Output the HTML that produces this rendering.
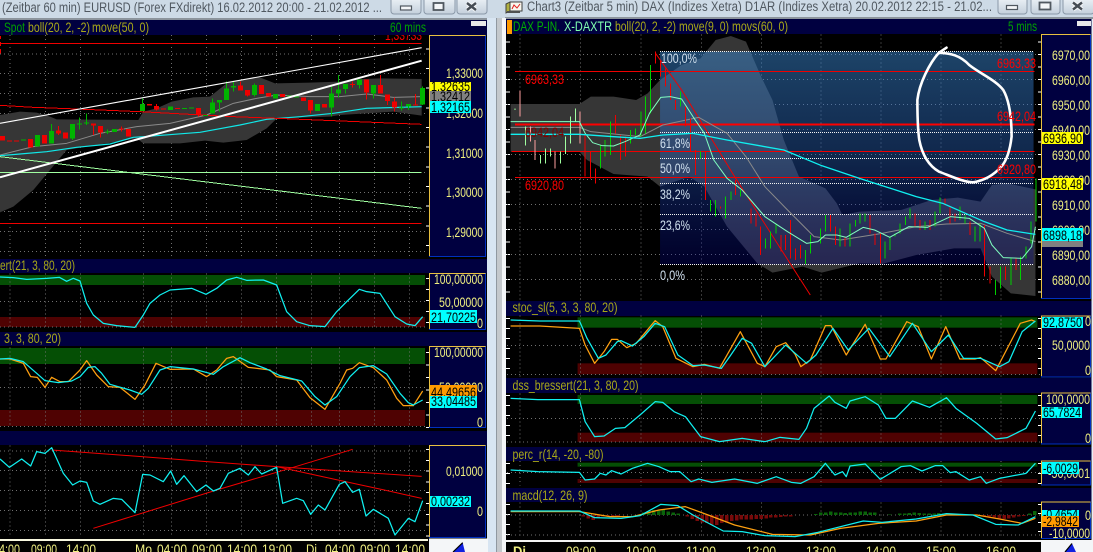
<!DOCTYPE html>
<html><head><meta charset="utf-8"><style>
html,body{margin:0;padding:0;background:#d8e5f2;width:1093px;height:552px;overflow:hidden}
svg{display:block;font-family:"Liberation Sans",sans-serif}
polyline,path,line,polygon,rect.n{vector-effect:non-scaling-stroke}
polyline{fill:none;stroke-linejoin:round}
.a{fill:#f0f080;font-size:14px}
.h{fill:#a8a818;font-size:14px}
.t{fill:#505860;font-size:13.5px}
.k{fill:#000;font-size:14px}
.r{fill:#ff0000;font-size:14px}
.f{fill:#d0e0ee;font-size:13.5px}
.g{stroke:#707070;stroke-width:1;stroke-dasharray:1 3;fill:none;shape-rendering:crispEdges}
.x{shape-rendering:crispEdges}
.cy{stroke:#10f0f0;stroke-width:1.25}
.or{stroke:#ffa010;stroke-width:1.25}
.ax{fill:#000040;stroke:#0030c0}
.gl{fill:none;stroke:#e8c040}
.tk{stroke:#fff;shape-rendering:crispEdges}
</style></head><body>
<svg width="1093" height="552" viewBox="0 0 1093 552" xmlns="http://www.w3.org/2000/svg">
<defs>
<linearGradient id="fib" x1="0" y1="0" x2="0" y2="1"><stop offset="0" stop-color="#3a88d0" stop-opacity=".5"/><stop offset=".5" stop-color="#2862be" stop-opacity=".4"/><stop offset="1" stop-color="#000096" stop-opacity=".28"/></linearGradient>
<linearGradient id="btn" x1="0" y1="0" x2="0" y2="1"><stop offset="0" stop-color="#eef3f8"/><stop offset="1" stop-color="#c4d0dc"/></linearGradient>
<clipPath id="cl"><rect x="0" y="35" width="428" height="221"/></clipPath>
<clipPath id="cr"><rect x="507" y="34" width="534" height="266"/></clipPath>
</defs>
<rect width="1093" height="552" fill="#d8e5f2"/>
<rect x="0" y="0" width="1093" height="18" fill="#cddae6"/>
<rect x="0" y="18" width="487" height="2" fill="#8c949c"/>
<rect x="505" y="17" width="588" height="2" fill="#8c949c"/>
<rect x="497" y="18" width="5" height="534" fill="#c4c8cc"/>
<rect x="496" y="18" width="1" height="534" fill="#9098a0"/>
<rect x="502" y="18" width="4" height="534" fill="#f4f6f8"/>

<!-- title bars -->
<text class="t" x="2" y="12" textLength="380" lengthAdjust="spacingAndGlyphs">(Zeitbar 60 min)  EURUSD (Forex FXdirekt) 16.02.2012 20:00 - 21.02.2012 ...</text>
<g fill="url(#btn)" stroke="#8a98a8">
<rect x="391" y="-3" width="30" height="17" rx="3"/><rect x="424" y="-3" width="31" height="17" rx="3"/><rect x="457" y="-3" width="30" height="17" rx="3"/>
<rect x="998" y="-3" width="29" height="17" rx="3"/><rect x="1031" y="-3" width="29" height="17" rx="3"/><rect x="1063" y="-3" width="31" height="17" rx="3"/>
</g>
<g fill="#f4f6f8" stroke="#505860" stroke-width="1.2">
<rect x="400.5" y="6" width="11" height="4"/><rect x="433.5" y="3" width="10" height="7" stroke-width="1.8"/>
<rect x="1006.5" y="5.5" width="11" height="4"/><rect x="1039.5" y="2.5" width="11" height="7" stroke-width="1.8"/>
</g>
<path d="M467 3L476 10M476 3L467 10M1073 2.5L1082 9.5M1082 2.5L1073 9.5" stroke="#f4f6f8" stroke-width="4.5" fill="none"/>
<path d="M467 3L476 10M476 3L467 10M1073 2.5L1082 9.5M1082 2.5L1073 9.5" stroke="#454c54" stroke-width="2.4" fill="none"/>
<g><rect x="510" y="2" width="12" height="9" fill="#f8f8f0" stroke="#404040"/><path d="M512 9L514 5L517 8L520 4" stroke="#e02020" fill="none"/><path d="M506 4L510 2V11L506 13Z" fill="#b0b040" stroke="#404040"/><rect x="507" y="11" width="13" height="2" fill="#505050"/></g>
<text class="t" x="527" y="11" textLength="465" lengthAdjust="spacingAndGlyphs">Chart3 (Zeitbar 5 min)  DAX (Indizes Xetra) D1AR (Indizes Xetra) 20.02.2012 22:15 - 21.02...</text>

<!-- LEFT WINDOW -->
<rect x="0" y="20" width="487" height="532" fill="#000"/>
<rect x="0" y="20" width="487" height="15" fill="#000040"/>
<rect x="471" y="21" width="15" height="5" fill="#e8e8e8"/>
<text x="4" y="32" font-size="14" fill="#00a000" textLength="21" lengthAdjust="spacingAndGlyphs">Spot</text>
<text class="h" x="28" y="32" textLength="62" lengthAdjust="spacingAndGlyphs">boll(20, 2, -2)</text>
<text class="h" x="92" y="32" textLength="57" lengthAdjust="spacingAndGlyphs">move(50, 0)</text>
<text x="390" y="32" font-size="14" fill="#00a000" textLength="36" lengthAdjust="spacingAndGlyphs">60 mins</text>
<path d="M0.5,36V39M0.5,42V46M0.5,49V54" stroke="#f00000" fill="none"/>

<g clip-path="url(#cl)"><g transform="scale(.33333)">
<path class="g" d="M30,105V768M136,105V768M241,105V768M430,105V768M514,105V768M619,105V768M724,105V768M829,105V768M934,105V768M1018,105V768M1123,105V768M1228,105V768M0,104H1280M0,162H1280M0,220H1280M0,280H1280M0,340H1280M0,398H1280M0,458H1280M0,517H1280M0,577H1280M0,635H1280M0,695H1280M0,755H1280"/>
<path fill="#363636" d="M0,345L60,335L110,338L150,350L170,358L415,360L430,335L470,325L515,305L580,292L630,290L680,250L720,240L780,232L825,250L930,248L1018,245L1060,238L1140,235L1265,237V347L1180,335L1020,345L990,350L830,356L800,385L740,420L670,428L615,422L540,430L430,430L410,415L200,450L150,510L100,570L40,620L0,637Z"/>
<polyline stroke="#8a8a8a" points="0,465 100,440 200,430 300,400 410,380 510,370 620,345 700,310 770,295 830,285 930,290 1020,290 1100,282 1180,292 1265,290"/>
<polyline stroke="#10e8e8" stroke-width="1.2" points="0,467 60,462 140,455 230,442 330,432 400,412 430,410 600,397 720,375 800,358 900,350 1000,340 1100,325 1265,320"/>
<line class="x" x1="0" y1="130" x2="1265" y2="130" stroke="#f00000"/>
<line class="x" x1="0" y1="670" x2="1265" y2="670" stroke="#f00000"/>
<polyline class="x" stroke="#f00000" points="0,316 100,322 230,327 420,335 700,350 830,355 1000,362 1265,373"/>
<line class="x" x1="0" y1="517" x2="1265" y2="517" stroke="#a0ffa0"/>
<polyline class="x" stroke="#a0ffa0" points="0,470 1265,625"/>
<path class="x" fill="none" stroke="#00b400" stroke-width="1" d="M154,372V393M217,372V420M238,352V388M259,340V375M322,388V402M427,295V312M637,296V308M658,308V335M679,245V265M700,245V275M763,250V290M994,260V350M1015,225V292M1036,267V280M1078,255V265M1120,280V295M1204,305V332M1225,320V330M1267,260V315"/>
<path class="x" fill="none" stroke="#00b400" stroke-width="5" d="M70,418V421M112,405V440M154,393V430M217,372V415M238,371V374M259,367V370M322,394V397M343,387V396M427,312V333M511,320V330M553,324V327M574,323V326M616,345V348M637,308V340M658,300V308M679,265V300M700,258V263M763,255V285M826,282V295M868,287V290M889,289V292M952,312V333M994,280V322M1015,268V280M1036,252V267M1078,238V255M1120,255V280M1204,322V325M1225,312V320M1267,264V313"/>
<path class="x" fill="none" stroke="#f00000" stroke-width="1" d="M175,378V405M280,371V405M301,398V412M364,380V395M595,345V350M721,245V257M742,286V290M931,332V340M1057,245V262M1099,278V298M1141,225V255M1162,303V315M1183,292V335M1246,282V316M469,312V332"/>
<path class="x" fill="none" stroke="#f00000" stroke-width="5" d="M7,408V422M28,421V424M49,422V425M91,417V442M133,405V430M175,392V400M196,398V415M280,371V376M301,378V398M364,386V389M385,387V410M448,312V316M469,318V328M490,326V329M532,324V327M595,324V345M721,257V271M742,270V286M784,255V282M805,279V290M847,282V291M910,292V303M931,300V332M973,312V322M1057,252V255M1099,238V278M1141,255V280M1162,283V303M1183,305V322M1246,313V316"/>
<line x1="0" y1="370" x2="1265" y2="143" stroke="#fff" stroke-width="1.1"/>
<line x1="0" y1="532" x2="1265" y2="182" stroke="#fff" stroke-width="2"/>
</g>
<text class="r" x="385" y="40" textLength="37" lengthAdjust="spacingAndGlyphs">1,33733</text>
</g>

<!-- left axis main -->
<line class="tk" x1="427.5" y1="34" x2="427.5" y2="256" stroke-width="3" stroke-dasharray="1 18.67" stroke-dashoffset="-14.3"/>
<rect class="ax" x="429.5" y="35.5" width="56" height="221"/>
<path class="gl" d="M429.5,256V35.5H485.5"/>
<g class="a">
<text x="446" y="78" textLength="37" lengthAdjust="spacingAndGlyphs">1,33000</text>
<text x="446" y="118" textLength="37" lengthAdjust="spacingAndGlyphs">1,32000</text>
<text x="446" y="158" textLength="37" lengthAdjust="spacingAndGlyphs">1,31000</text>
<text x="446" y="197" textLength="37" lengthAdjust="spacingAndGlyphs">1,30000</text>
<text x="446" y="237" textLength="37" lengthAdjust="spacingAndGlyphs">1,29000</text>
</g>
<text class="k" x="431" y="93" textLength="39" lengthAdjust="spacingAndGlyphs">1,32635</text>
<rect x="430" y="82" width="41" height="9" fill="#ffff00"/>
<text class="k" x="431" y="91" textLength="39" lengthAdjust="spacingAndGlyphs">1,32635</text>
<rect x="430" y="91" width="41" height="10" fill="#808080"/><text class="k" x="431" y="101" textLength="39" lengthAdjust="spacingAndGlyphs">1,32412</text>
<rect x="430" y="101" width="41" height="12" fill="#00ffff"/><text class="k" x="431" y="112" textLength="39" lengthAdjust="spacingAndGlyphs">1,32165</text>

<!-- left sub panels -->
<rect x="0" y="259" width="487" height="14" fill="#000040"/>
<rect x="0" y="332" width="487" height="14" fill="#000040"/>
<rect x="0" y="431" width="487" height="14" fill="#000040"/>
<text class="h" x="0" y="270" textLength="75" lengthAdjust="spacingAndGlyphs">ert(21, 3, 80, 20)</text>
<text class="h" x="4" y="343" textLength="57" lengthAdjust="spacingAndGlyphs">3, 3, 80, 20)</text>
<rect x="0" y="275" width="425" height="10" fill="#054f05"/>
<rect x="0" y="317" width="425" height="10" fill="#4f0202"/>
<rect x="0" y="348" width="425" height="16" fill="#054f05"/>
<rect x="0" y="410" width="425" height="16" fill="#4f0202"/>
<g transform="translate(0,255) scale(.33333)">
<path class="g" d="M30,55V224M136,55V224M241,55V224M430,55V224M514,55V224M619,55V224M724,55V224M829,55V224M934,55V224M1018,55V224M1123,55V224M1228,55V224M30,278V515M136,278V515M241,278V515M430,278V515M514,278V515M619,278V515M724,278V515M829,278V515M934,278V515M1018,278V515M1123,278V515M1228,278V515M30,572V848M136,572V848M241,572V848M430,572V848M514,572V848M619,572V848M724,572V848M829,572V848M934,572V848M1018,572V848M1123,572V848M1228,572V848M0,140H1275M0,398H1275M0,588H1275M0,646H1275M0,707H1275M0,767H1275M0,827H1275"/>
<path class="g" d="M0,216H1275M0,514H1275"/>
<polyline class="cy" points="0,66 40,68 80,73 140,70 178,67 200,79 220,70 240,78 260,145 280,180 310,205 350,212 405,217 430,180 450,145 480,120 510,105 575,100 618,118 650,100 680,75 710,67 740,76 790,75 830,90 860,170 890,200 930,212 975,215 1010,170 1040,140 1078,103 1100,110 1140,115 1185,185 1220,207 1245,212 1268,185"/>
<polyline class="or" points="0,312 30,312 70,325 92,365 112,367 135,397 155,367 180,380 205,380 240,345 260,317 290,360 325,395 360,397 405,433 435,390 468,325 510,343 580,342 620,365 650,345 680,310 700,305 745,337 810,345 830,365 890,375 930,428 975,463 1020,385 1040,345 1058,340 1078,323 1120,338 1160,375 1190,430 1210,452 1240,452 1268,408"/>
<polyline class="cy" points="0,312 30,310 70,320 110,355 135,377 175,383 215,378 240,365 265,337 285,335 305,355 330,388 355,395 390,405 425,418 445,400 480,345 510,335 580,342 640,358 670,335 720,308 750,323 800,342 840,362 905,378 945,425 975,450 1010,425 1050,365 1078,338 1120,332 1160,357 1200,415 1225,443 1240,450 1268,435"/>
<polyline stroke="#f00000" points="155,585 400,603 620,620 830,635 1050,650 1265,664"/>
<polyline stroke="#f00000" points="830,635 1000,672 1130,700 1265,730"/>
<polyline stroke="#f00000" points="280,820 650,705 860,643 1058,583"/>
<polyline class="cy" points="0,612 28,637 65,612 92,633 110,590 135,595 155,578 190,655 218,690 240,678 260,682 280,738 300,748 340,730 365,733 405,773 428,658 450,660 490,680 512,648 530,688 552,662 590,710 618,690 640,708 660,700 685,655 720,640 745,660 765,635 785,657 830,637 848,745 890,730 910,737 932,778 955,750 975,765 1018,688 1035,680 1058,712 1078,703 1098,783 1120,763 1165,790 1185,840 1225,790 1245,800 1268,737"/>
</g>
<line class="tk" x1="427.5" y1="273" x2="427.5" y2="330" stroke-width="3" stroke-dasharray="1 10" stroke-dashoffset="-5"/>
<line class="tk" x1="427.5" y1="346" x2="427.5" y2="428" stroke-width="3" stroke-dasharray="1 11.5" stroke-dashoffset="-6"/>
<line class="tk" x1="427.5" y1="446" x2="427.5" y2="537" stroke-width="3" stroke-dasharray="1 9.8" stroke-dashoffset="-3"/>
<rect class="ax" x="429.5" y="273.5" width="56" height="56"/><path class="gl" d="M429.5,329V273.5H485.5"/>
<rect class="ax" x="429.5" y="346.5" width="56" height="81"/><path class="gl" d="M429.5,427V346.5H485.5"/>
<rect class="ax" x="429.5" y="445.5" width="56" height="92"/><path class="gl" d="M429.5,537V445.5H485.5"/>
<g class="a">
<text x="434" y="284" textLength="49" lengthAdjust="spacingAndGlyphs">100,00000</text>
<text x="439" y="307" textLength="44" lengthAdjust="spacingAndGlyphs">50,00000</text>
<text x="477" y="328" textLength="6" lengthAdjust="spacingAndGlyphs">0</text>
<text x="434" y="357" textLength="49" lengthAdjust="spacingAndGlyphs">100,00000</text>
<text x="439" y="392" textLength="44" lengthAdjust="spacingAndGlyphs">50,00000</text>
<text x="477" y="427" textLength="6" lengthAdjust="spacingAndGlyphs">0</text>
<text x="446" y="476" textLength="37" lengthAdjust="spacingAndGlyphs">0,01000</text>
<text x="477" y="516" textLength="6" lengthAdjust="spacingAndGlyphs">0</text>
</g>
<rect x="430" y="310" width="47" height="13" fill="#00ffff"/><text class="k" x="431" y="322" textLength="45" lengthAdjust="spacingAndGlyphs">21,70225</text>
<rect x="430" y="385" width="47" height="11" fill="#ff9a00"/><text class="k" x="431" y="397" textLength="45" lengthAdjust="spacingAndGlyphs">44,49656</text>
<rect x="430" y="396" width="47" height="12" fill="#00ffff"/><text class="k" x="431" y="406" textLength="45" lengthAdjust="spacingAndGlyphs">33,04485</text>
<rect x="430" y="496" width="41" height="11" fill="#00ffff"/><text class="k" x="431" y="506" textLength="39" lengthAdjust="spacingAndGlyphs">0,00232</text>

<!-- left time axis -->
<rect x="0" y="539" width="428" height="2" fill="#f8f8e0"/>
<rect x="429" y="538.5" width="59" height="13.5" fill="#f4f6f8"/>
<polygon points="453,552 462.7,542.7 465,552" fill="#1020e0"/>
<path d="M453,552L462.7,542.7" stroke="#000" stroke-width="1.2" fill="none"/>
<g class="a" font-size="14">
<text x="-7" y="554" textLength="27" lengthAdjust="spacingAndGlyphs">04:00</text>
<text x="31" y="554" textLength="26" lengthAdjust="spacingAndGlyphs">09:00</text>
<text x="66" y="554" textLength="30" lengthAdjust="spacingAndGlyphs">14:00</text>
<text x="135" y="554" textLength="17" lengthAdjust="spacingAndGlyphs">Mo</text>
<text x="157" y="554" textLength="30" lengthAdjust="spacingAndGlyphs">04:00</text>
<text x="192" y="554" textLength="30" lengthAdjust="spacingAndGlyphs">09:00</text>
<text x="227" y="554" textLength="30" lengthAdjust="spacingAndGlyphs">14:00</text>
<text x="262" y="554" textLength="30" lengthAdjust="spacingAndGlyphs">19:00</text>
<text x="306" y="554" textLength="11" lengthAdjust="spacingAndGlyphs">Di</text>
<text x="325" y="554" textLength="30" lengthAdjust="spacingAndGlyphs">04:00</text>
<text x="360" y="554" textLength="30" lengthAdjust="spacingAndGlyphs">09:00</text>
<text x="395" y="554" textLength="30" lengthAdjust="spacingAndGlyphs">14:00</text>
</g>

<!-- RIGHT WINDOW -->
<rect x="506" y="19" width="585.5" height="533" fill="#000"/>
<rect x="506" y="19" width="585.5" height="15" fill="#000040"/>
<rect x="507" y="20" width="5" height="14" fill="#ff9a00"/>
<rect x="1077" y="21" width="14" height="5" fill="#e8e8e8"/>
<text x="513" y="31" font-size="14" fill="#00b000" textLength="47" lengthAdjust="spacingAndGlyphs">DAX P-IN.</text>
<text x="564" y="31" font-size="14" fill="#80ffb0" textLength="48" lengthAdjust="spacingAndGlyphs">X-DAXTR</text>
<text class="h" x="615" y="31" textLength="61" lengthAdjust="spacingAndGlyphs">boll(20, 2, -2)</text>
<text class="h" x="679" y="31" textLength="50" lengthAdjust="spacingAndGlyphs">move(9, 0)</text>
<text class="h" x="732" y="31" textLength="56" lengthAdjust="spacingAndGlyphs">movs(60, 0)</text>
<text x="1008" y="31" font-size="14" fill="#00a000" textLength="29" lengthAdjust="spacingAndGlyphs">5 mins</text>
<line class="tk" x1="508" y1="41.5" x2="508" y2="300" stroke-width="4" stroke-dasharray="1 11.5"/>

<g clip-path="url(#cr)"><g transform="translate(500,0) scale(.3784,.33333)">
<path class="g" d="M53,103V900M213,103V900M372,103V900M532,103V900M691,103V900M848,103V900M1007,103V900M1165,103V900M1324,103V900M18,163H1428M18,238H1428M18,313H1428M18,388H1428M18,463H1428M18,538H1428M18,613H1428M18,688H1428M18,763H1428M18,838H1428"/>
<path fill="#363636" d="M28,312L210,312L240,290L300,290L360,300L390,280L423,240L480,195L530,175L570,120L610,108L650,125L690,230L720,300L750,420L790,530L860,565L890,610L905,645L950,635L1060,630L1140,600L1210,593L1270,605L1300,555L1340,550L1415,568V888L1350,880L1300,830L1270,745L1200,745L1100,765L1010,792L950,790L850,818L800,800L720,818L680,790L600,680L540,560L500,530L423,560L390,530L300,522L230,480L210,455L28,455Z"/>
<rect x="423" y="155" width="987" height="638" fill="url(#fib)"/>
<path class="x" fill="none" stroke="#f4f4f4" stroke-width="1" stroke-dasharray="1 1" d="M423,155H1410M423,397H1410M423,475H1410M423,551H1410M423,643H1410M423,793H1410"/>
<path class="x" fill="none" stroke="#f00000" d="M40,214H1412M30,454H1412M40,533H1412"/>
<path class="x" fill="none" stroke="#ff0000" stroke-width="2" d="M40,374H1412"/>
<polyline stroke="#f00000" points="411,160 480,270 620,530 820,885"/>
<polyline stroke="#8a8a8a" points="28,382 210,382 240,395 370,410 430,375 525,352 600,400 650,470 700,560 760,630 830,710 900,720 1010,700 1100,680 1180,672 1270,670 1340,700 1415,725"/>
<path class="x" fill="none" stroke="#ffa0a0" stroke-width="1" d="M53,272V350M80,380V425M93,420V480M146,455V505M212,335V430"/>
<path class="x" fill="none" stroke="#a0ffa0" stroke-width="1" d="M40,325V330M67,380V437M107,465V490M120,445V490M133,445V470M160,455V490M173,410V462M186,350V430M199,325V365"/>
<path class="x" fill="none" stroke="#f00000" stroke-width="1" d="M225,405V530M239,455V535M252,505V550M305,345V400M318,405V480M331,410V470M411,155V190M424,180V230M437,205V260M450,250V300M464,300V330M490,320V380M503,355V455M516,450V525M543,455V600M583,620V625M623,540V585M663,625V670M676,640V680M689,680V765M742,705V755M755,705V750M768,660V775M781,745V780M794,735V775M873,645V695M886,680V735M912,710V740M978,645V700M991,700V735M1005,700V790M1097,640V680M1110,660V690M1136,660V690M1176,595V615M1189,620V670M1202,640V665M1242,665V705M1281,675V830M1295,800V850M1336,800V840M1363,775V810"/>
<path class="x" fill="none" stroke="#00d000" stroke-width="1" d="M265,435V505M278,420V470M292,365V465M345,390V430M358,385V405M372,335V410M385,290V400M398,195V340M477,275V320M530,455V475M556,600V635M570,600V650M596,590V655M610,575V600M636,570V590M702,715V745M715,695V745M729,670V700M807,750V792M820,705V760M847,685V730M860,645V695M899,685V740M925,670V740M939,660V680M952,640V670M965,640V665M1018,725V775M1031,710V750M1044,700V710M1057,670V700M1071,650V675M1084,625V655M1123,665V690M1149,635V680M1163,592V640M1216,620V660M1229,645V670M1255,680V725M1268,670V725M1310,840V885M1323,800V865M1350,775V855M1376,770V840M1390,740V775M1403,665V730M1416,535V665"/>
<polyline stroke="#80ffc0" points="28,365 210,365 225,400 245,428 270,437 300,438 330,425 370,405 395,340 425,292 450,290 480,297 510,350 540,400 565,480 600,535 640,570 700,650 760,695 810,730 840,725 860,705 890,705 915,712 960,682 990,690 1030,712 1080,680 1130,682 1190,650 1240,655 1280,685 1300,735 1330,773 1380,775 1405,740 1415,680"/>
<polyline stroke="#10f0f0" stroke-width="1.3" points="28,403 210,403 300,410 370,415 430,405 510,400 600,420 750,450 850,497 950,535 1100,590 1170,610 1280,665 1340,690 1415,703"/>
<path fill="none" stroke="#fff" stroke-width="2.6" stroke-linecap="round" stroke-linejoin="round" d="M1180,143L1160,158C1190,160 1215,165 1240,195C1270,222 1310,240 1330,270C1345,300 1352,345 1352,410C1348,450 1340,480 1325,500C1305,525 1280,542 1250,547C1220,545 1185,525 1160,515C1130,495 1115,460 1108,420C1103,380 1103,340 1103,300C1108,250 1135,190 1160,158"/>
</g>
<g class="f">
<text x="661" y="63" textLength="36" lengthAdjust="spacingAndGlyphs">100,0%</text>
<text x="660" y="148" textLength="30" lengthAdjust="spacingAndGlyphs">61,8%</text>
<text x="660" y="173" textLength="30" lengthAdjust="spacingAndGlyphs">50,0%</text>
<text x="660" y="199" textLength="30" lengthAdjust="spacingAndGlyphs">38,2%</text>
<text x="660" y="230" textLength="30" lengthAdjust="spacingAndGlyphs">23,6%</text>
<text x="660" y="280" textLength="25" lengthAdjust="spacingAndGlyphs">0,0%</text>
</g>
<g class="r">
<text x="525" y="84" textLength="39" lengthAdjust="spacingAndGlyphs">6963,33</text>
<text x="525" y="137" textLength="39" lengthAdjust="spacingAndGlyphs" fill="#800000">6942,04</text>
<text x="525" y="190" textLength="39" lengthAdjust="spacingAndGlyphs">6920,80</text>
<text x="997" y="68" textLength="39" lengthAdjust="spacingAndGlyphs">6963,33</text>
<text x="997" y="121" textLength="39" lengthAdjust="spacingAndGlyphs">6942,04</text>
<text x="997" y="174" textLength="39" lengthAdjust="spacingAndGlyphs">6920,80</text>
</g></g>
<!-- right axis main -->
<line class="tk" x1="1039.5" y1="41.5" x2="1039.5" y2="299" stroke-width="3" stroke-dasharray="1 11.5"/>
<rect class="ax" x="1041.5" y="34.5" width="49" height="264"/><path class="gl" d="M1041.5,298V34.5H1090.5"/>
<g class="a">
<text x="1052" y="60" textLength="38" lengthAdjust="spacingAndGlyphs">6970,00</text>
<text x="1052" y="85" textLength="38" lengthAdjust="spacingAndGlyphs">6960,00</text>
<text x="1052" y="110" textLength="38" lengthAdjust="spacingAndGlyphs">6950,00</text>
<text x="1052" y="135" textLength="38" lengthAdjust="spacingAndGlyphs">6940,00</text>
<text x="1052" y="160" textLength="38" lengthAdjust="spacingAndGlyphs">6930,00</text>
<text x="1052" y="185" textLength="38" lengthAdjust="spacingAndGlyphs">6920,00</text>
<text x="1052" y="210" textLength="38" lengthAdjust="spacingAndGlyphs">6910,00</text>
<text x="1052" y="235" textLength="38" lengthAdjust="spacingAndGlyphs">6900,00</text>
<text x="1052" y="260" textLength="38" lengthAdjust="spacingAndGlyphs">6890,00</text>
<text x="1052" y="285" textLength="38" lengthAdjust="spacingAndGlyphs">6880,00</text>
</g>
<rect x="1042" y="132" width="41" height="12" fill="#ffff00"/><text class="k" x="1043" y="143" textLength="39" lengthAdjust="spacingAndGlyphs">6936,90</text>
<rect x="1042" y="178" width="41" height="12" fill="#ffff00"/><text class="k" x="1043" y="189" textLength="39" lengthAdjust="spacingAndGlyphs">6918,48</text>
<rect x="1042" y="241" width="41" height="6" fill="#808080"/>
<rect x="1042" y="228" width="41" height="13" fill="#00ffff"/><text class="k" x="1043" y="240" textLength="39" lengthAdjust="spacingAndGlyphs">6898,18</text>

<!-- right sub panels -->
<rect x="506" y="301" width="585.5" height="15" fill="#000040"/>
<rect x="506" y="378" width="585.5" height="15" fill="#000040"/>
<rect x="506" y="447" width="585.5" height="14" fill="#000040"/>
<rect x="506" y="488" width="585.5" height="14" fill="#000040"/>
<text class="h" x="512.5" y="312" textLength="105" lengthAdjust="spacingAndGlyphs">stoc_sl(5, 3, 3, 80, 20)</text>
<text class="h" x="512.5" y="390" textLength="126" lengthAdjust="spacingAndGlyphs">dss_bressert(21, 3, 80, 20)</text>
<text class="h" x="512.5" y="459" textLength="91" lengthAdjust="spacingAndGlyphs">perc_r(14, -20, -80)</text>
<text class="h" x="512.5" y="500" textLength="75" lengthAdjust="spacingAndGlyphs">macd(12, 26, 9)</text>
<line class="tk" x1="508" y1="318" x2="508" y2="377" stroke-width="4" stroke-dasharray="1 9"/>
<line class="tk" x1="508" y1="395" x2="508" y2="444" stroke-width="4" stroke-dasharray="1 9"/>
<line class="tk" x1="508" y1="463" x2="508" y2="485" stroke-width="4" stroke-dasharray="1 9"/>
<line class="tk" x1="508" y1="504" x2="508" y2="538" stroke-width="4" stroke-dasharray="1 9"/>
<g transform="translate(500,295) scale(.3784,.33333)">
<rect x="205" y="67" width="1215" height="31" fill="#054f05"/>
<rect x="205" y="205" width="1215" height="33" fill="#4f0202"/>
<rect x="205" y="300" width="1215" height="27" fill="#054f05"/>
<rect x="205" y="413" width="1215" height="28" fill="#4f0202"/>
<rect x="205" y="503" width="1215" height="12" fill="#054f05"/>
<rect x="205" y="552" width="1215" height="12" fill="#4f0202"/>
<path class="g" d="M53,62V245M213,62V245M372,62V245M532,62V245M691,62V245M848,62V245M1007,62V245M1165,62V245M1324,62V245M53,295V447M213,295V447M372,295V447M532,295V447M691,295V447M848,295V447M1007,295V447M1165,295V447M1324,295V447M53,498V572M213,498V572M372,498V572M532,498V572M691,498V572M848,498V572M1007,498V572M1165,498V572M1324,498V572M53,622V730M213,622V730M372,622V730M532,622V730M691,622V730M848,622V730M1007,622V730M1165,622V730M1324,622V730M18,152H1428M18,370H1428M18,533H1428M18,660H1428M18,720H1428M18,238H1428M18,441H1428"/>
<path class="x" fill="none" stroke="#0a640a" stroke-width="3.5" d="M380,660V653M393,660V648M406,660V645M419,660V645M432,660V643M445,660V650M458,660V653M471,660V655M835,660V657M848,660V653M861,660V652M874,660V649M887,660V652M900,660V653M913,660V654M926,660V653M939,660V652M952,660V649M965,660V649M978,660V652M991,660V653M1030,660V658M1056,660V656M1069,660V655M1082,660V654M1095,660V652M1108,660V654M1121,660V655M1134,660V656M1147,660V655M1160,660V654M1173,660V655M1190,660V656M1400,660V656M1413,660V648"/>
<path class="x" fill="none" stroke="#780a0a" stroke-width="3.5" d="M220,660V665M233,660V670M246,660V675M259,660V668M272,660V664M285,660V665M298,660V664M311,660V663M495,660V665M508,660V672M521,660V678M534,660V682M547,660V684M560,660V690M573,660V690M586,660V684M599,660V682M612,660V678M625,660V676M638,660V674M651,660V674M664,660V674M677,660V672M690,660V672M703,660V670M716,660V668M729,660V667M742,660V666M755,660V665M768,660V664M1280,660V664M1293,660V665M1306,660V668M1319,660V672M1332,660V672M1345,660V670M1358,660V668M1371,660V665M1384,660V663"/>
<polyline class="or" points="28,93 105,93 210,100 225,150 250,205 275,170 295,133 310,133 335,158 360,145 410,77 430,95 465,190 510,215 540,208 580,220 635,110 680,205 700,215 730,155 755,143 780,178 795,215 820,195 860,92 875,92 915,180 965,88 1005,192 1020,192 1075,80 1105,95 1140,192 1178,95 1215,192 1255,192 1270,188 1310,227 1375,85 1405,75 1415,80"/>
<polyline class="cy" points="28,75 105,78 210,78 230,130 260,190 280,180 310,140 320,137 350,153 380,125 410,85 435,95 470,180 510,212 540,210 585,220 610,180 640,130 665,145 700,215 755,150 780,175 810,205 835,180 880,100 920,165 975,100 1030,185 1090,85 1140,170 1185,120 1225,190 1270,190 1320,215 1345,200 1380,110 1415,78"/>
<polyline class="cy" points="28,310 100,314 210,314 225,380 250,425 275,423 305,400 330,398 370,360 410,320 430,322 460,350 490,365 530,425 580,440 640,430 700,440 740,427 790,433 810,400 830,340 870,303 885,322 915,340 925,318 965,305 1000,330 1020,370 1045,370 1090,318 1135,337 1180,308 1205,340 1260,385 1310,432 1340,428 1390,400 1415,348"/>
<polyline class="cy" points="28,525 100,530 210,532 225,555 250,552 265,535 280,540 295,527 320,537 350,520 390,505 420,515 450,530 475,530 505,560 525,552 560,562 620,552 680,565 730,545 770,562 795,565 830,545 860,505 885,540 905,530 915,545 925,513 965,507 1005,553 1060,515 1085,512 1115,528 1150,512 1170,512 1190,533 1205,530 1240,555 1270,545 1285,565 1320,550 1390,535 1415,505"/>
<polyline class="or" points="28,650 210,650 290,665 350,665 420,645 490,635 550,660 620,690 720,718 820,720 900,700 1000,685 1100,678 1180,660 1260,660 1320,672 1380,685 1415,670"/>
<polyline class="cy" points="28,648 210,648 250,668 320,670 370,662 425,628 470,632 510,660 590,708 640,710 700,722 780,725 840,712 960,678 1010,682 1100,672 1180,656 1250,660 1310,688 1370,690 1415,665"/>
</g>
<line class="tk" x1="1039.5" y1="318" x2="1039.5" y2="377" stroke-width="3" stroke-dasharray="1 9"/>
<line class="tk" x1="1039.5" y1="395" x2="1039.5" y2="444" stroke-width="3" stroke-dasharray="1 9"/>
<line class="tk" x1="1039.5" y1="463" x2="1039.5" y2="485" stroke-width="3" stroke-dasharray="1 9"/>
<line class="tk" x1="1039.5" y1="504" x2="1039.5" y2="538" stroke-width="3" stroke-dasharray="1 8"/>
<rect class="ax" x="1041.5" y="316" width="49" height="61"/><path class="gl" d="M1041.5,376V316H1090.5"/>
<rect class="ax" x="1041.5" y="393" width="49" height="51"/><path class="gl" d="M1041.5,443V393H1090.5"/>
<rect class="ax" x="1041.5" y="461" width="49" height="24"/><path class="gl" d="M1041.5,484V461H1090.5"/>
<rect class="ax" x="1041.5" y="502" width="49" height="36.5"/><path class="gl" d="M1041.5,538V502H1090.5"/>
<g class="a">
<text x="1052" y="350" textLength="38" lengthAdjust="spacingAndGlyphs">50,0000</text>
<text x="1085" y="375" textLength="6" lengthAdjust="spacingAndGlyphs">0</text>
<text x="1085" y="326" textLength="6" lengthAdjust="spacingAndGlyphs">0</text>
<text x="1046" y="404" textLength="44" lengthAdjust="spacingAndGlyphs">100,0000</text>
<text x="1085" y="443" textLength="6" lengthAdjust="spacingAndGlyphs">0</text>
<text x="1048" y="478" textLength="42" lengthAdjust="spacingAndGlyphs">-50,0001</text>
<text x="1085" y="520" textLength="6" lengthAdjust="spacingAndGlyphs">0</text>
<text x="1049" y="538" textLength="41" lengthAdjust="spacingAndGlyphs">-10,0000</text>
</g>
<rect x="1042" y="317" width="41" height="11" fill="#00ffff"/><text class="k" x="1043" y="327" textLength="39" lengthAdjust="spacingAndGlyphs">92,8750</text>
<rect x="1042" y="407" width="40" height="11" fill="#00ffff"/><text class="k" x="1043" y="417" textLength="38" lengthAdjust="spacingAndGlyphs">65,7824</text>
<rect x="1042" y="462" width="37" height="12" fill="#00ffff"/><text class="k" x="1043" y="473" textLength="35" lengthAdjust="spacingAndGlyphs">-6,0029</text>
<rect x="1042" y="510" width="37" height="6" fill="#00ffff"/><text class="k" x="1043" y="519" textLength="35" lengthAdjust="spacingAndGlyphs">-0,4654</text>
<rect x="1042" y="516" width="37" height="11" fill="#ff9a00"/><text class="k" x="1043" y="526" textLength="35" lengthAdjust="spacingAndGlyphs">-2,9842</text>

<!-- right time axis -->
<rect x="506" y="540" width="535" height="2" fill="#f4f4f4"/>
<rect x="1041" y="540" width="52" height="12" fill="#f4f6f8"/>
<polygon points="1065,552 1072,543.5 1076,552" fill="#1020e0"/>
<path d="M1065,552L1072,543.5" stroke="#000" stroke-width="1.2" fill="none"/>
<rect x="1091.5" y="19" width="1.5" height="521" fill="#e8eef4"/>
<text x="513" y="556" font-size="14" font-weight="bold" fill="#f0f080" textLength="13" lengthAdjust="spacingAndGlyphs">Di</text>
<g class="a">
<text x="566" y="556" textLength="30" lengthAdjust="spacingAndGlyphs">09:00</text>
<text x="626" y="556" textLength="30" lengthAdjust="spacingAndGlyphs">10:00</text>
<text x="686" y="556" textLength="30" lengthAdjust="spacingAndGlyphs">11:00</text>
<text x="746" y="556" textLength="30" lengthAdjust="spacingAndGlyphs">12:00</text>
<text x="806" y="556" textLength="30" lengthAdjust="spacingAndGlyphs">13:00</text>
<text x="866" y="556" textLength="30" lengthAdjust="spacingAndGlyphs">14:00</text>
<text x="926" y="556" textLength="30" lengthAdjust="spacingAndGlyphs">15:00</text>
<text x="986" y="556" textLength="30" lengthAdjust="spacingAndGlyphs">16:00</text>
</g>
</svg>
</body></html>
